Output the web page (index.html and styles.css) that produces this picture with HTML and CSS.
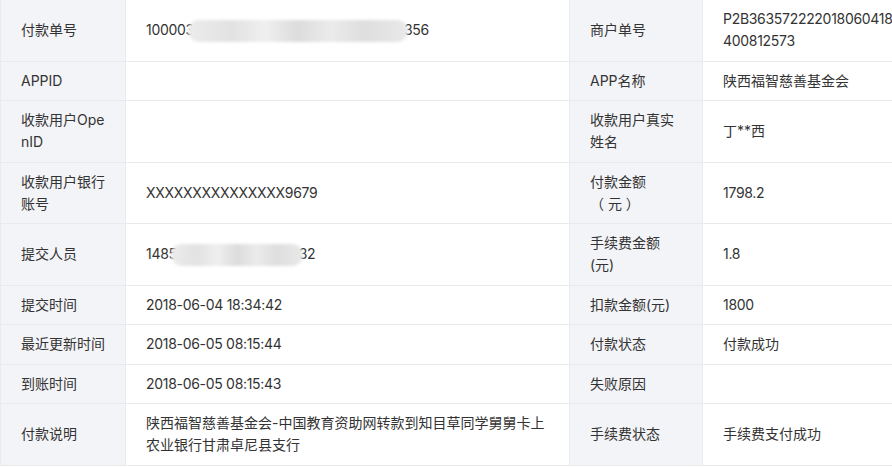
FILE: index.html
```html
<!DOCTYPE html>
<html lang="zh-CN">
<head>
    <meta charset="UTF-8">
    <title>付款详情</title>
    <link rel="stylesheet" href="styles.css">
</head>
<body>
    <table class="detail-table">
        <colgroup>
            <col class="col-label">
            <col class="col-value">
            <col class="col-label2">
            <col class="col-value2">
        </colgroup>
        <tr>
            <th>付款单号</th>
            <td class="num">100003<span class="mask mask-long"></span>356</td>
            <th>商户单号</th>
            <td class="num">P2B3635722220180604184<br>400812573</td>
        </tr>
        <tr>
            <th>APPID</th>
            <td></td>
            <th>APP名称</th>
            <td>陕西福智慈善基金会</td>
        </tr>
        <tr>
            <th>收款用户OpenID</th>
            <td></td>
            <th>收款用户真实姓名</th>
            <td>丁**西</td>
        </tr>
        <tr>
            <th>收款用户银行账号</th>
            <td class="num">XXXXXXXXXXXXXXX9679</td>
            <th>付款金额<br>（ 元 ）</th>
            <td class="num">1798.2</td>
        </tr>
        <tr>
            <th>提交人员</th>
            <td class="num">1485<span class="mask mask-short"></span>32</td>
            <th>手续费金额<br>(元)</th>
            <td class="num">1.8</td>
        </tr>
        <tr>
            <th>提交时间</th>
            <td class="num">2018-06-04 18:34:42</td>
            <th>扣款金额(元)</th>
            <td class="num">1800</td>
        </tr>
        <tr>
            <th>最近更新时间</th>
            <td class="num">2018-06-05 08:15:44</td>
            <th>付款状态</th>
            <td>付款成功</td>
        </tr>
        <tr>
            <th>到账时间</th>
            <td class="num">2018-06-05 08:15:43</td>
            <th>失败原因</th>
            <td></td>
        </tr>
        <tr>
            <th>付款说明</th>
            <td>陕西福智慈善基金会-中国教育资助网转款到知目草同学舅舅卡上农业银行甘肃卓尼县支行</td>
            <th>手续费状态</th>
            <td>手续费支付成功</td>
        </tr>
    </table>
</body>
</html>
```

FILE: styles.css
```css
body {
    margin: 0;
    background: #fff;
    overflow: hidden;
    font-family: Inter, "Noto Sans CJK SC", sans-serif;
    font-size: 14px;
    color: #333;
}
.detail-table {
    width: 960px;
    margin-top: -1px;
    border-collapse: collapse;
    table-layout: fixed;
}
.col-label {
    width: 125px;
}
.col-value {
    width: 444px;
}
.col-label2 {
    width: 133px;
}
.detail-table th,
.detail-table td {
    padding: 8.25px 20px;
    line-height: 22px;
    text-align: left;
    font-weight: normal;
    vertical-align: middle;
    border: 1px solid #e8eaec;
    border-right: none;
    word-break: break-all;
}
.detail-table th {
    background: #f3f4f8;
}
.detail-table td.num {
    letter-spacing: -0.3px;
}
.mask {
    display: inline-block;
    height: 22px;
    vertical-align: middle;
    border-radius: 11px;
    background: linear-gradient(90deg, #ececec 0%, #e2e2e2 20%, #efefef 35%, #dcdcdc 50%, #ebebeb 65%, #dedede 80%, #e9e9e9 100%);
    filter: blur(1.5px);
}
.mask-long {
    width: 220px;
    margin: 0 -4px 0 -6px;
}
.mask-short {
    width: 132px;
    margin: 0 -4px 0 -6px;
}
```
